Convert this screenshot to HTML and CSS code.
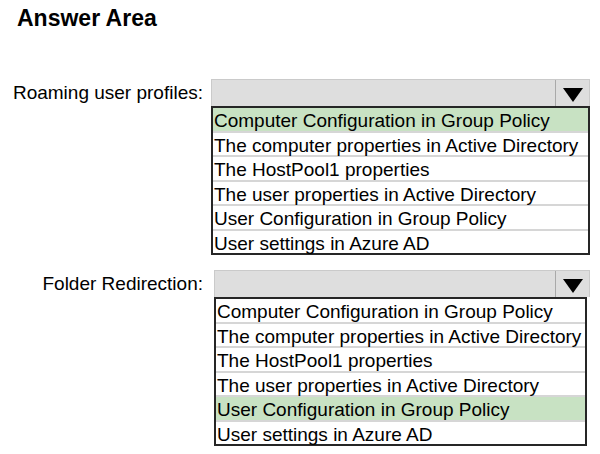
FILE: index.html
```html
<!DOCTYPE html>
<html lang="en">
<head>
<meta charset="utf-8">
<title>Answer Area</title>
<link rel="stylesheet" href="styles.css">
</head>
<body>
<main class="answer-area">
  <h1 class="title">Answer Area</h1>

  <section class="question">
    <div class="label">Roaming user profiles:</div>
    <div class="dropdown">
      <div class="dropdown-head">
        <span class="dropdown-value"></span>
        <span class="dropdown-arrow">
          <svg width="20" height="14" viewBox="0 0 20 14"><polygon points="0,0 20,0 10,14" fill="#000"/></svg>
        </span>
      </div>
      <ul class="dropdown-list">
        <li class="option selected">Computer Configuration in Group Policy</li>
        <li class="option">The computer properties in Active Directory</li>
        <li class="option">The HostPool1 properties</li>
        <li class="option">The user properties in Active Directory</li>
        <li class="option">User Configuration in Group Policy</li>
        <li class="option">User settings in Azure AD</li>
      </ul>
    </div>
  </section>

  <section class="question question-second">
    <div class="label">Folder Redirection:</div>
    <div class="dropdown dropdown-shifted">
      <div class="dropdown-head">
        <span class="dropdown-value"></span>
        <span class="dropdown-arrow">
          <svg width="20" height="14" viewBox="0 0 20 14"><polygon points="0,0 20,0 10,14" fill="#000"/></svg>
        </span>
      </div>
      <ul class="dropdown-list">
        <li class="option">Computer Configuration in Group Policy</li>
        <li class="option">The computer properties in Active Directory</li>
        <li class="option">The HostPool1 properties</li>
        <li class="option">The user properties in Active Directory</li>
        <li class="option selected">User Configuration in Group Policy</li>
        <li class="option">User settings in Azure AD</li>
      </ul>
    </div>
  </section>
</main>
</body>
</html>
```

FILE: styles.css
```css
html, body {
  margin: 0;
  padding: 0;
  background: #fff;
}

body {
  font-family: "Liberation Sans", Arial, sans-serif;
  color: #000;
}

.answer-area {
  padding-top: 5px;
}

.title {
  margin: 0;
  padding-left: 17px;
  font-size: 23px;
  font-weight: bold;
  line-height: 26px;
}

.question {
  display: grid;
  grid-template-columns: 203px 379px;
  column-gap: 8px;
  align-items: start;
  margin-top: 48px;
}

.question-second {
  margin-top: 15px;
}

.label {
  text-align: right;
  font-size: 19px;
  line-height: 27px;
  white-space: nowrap;
}

.dropdown-shifted {
  margin-left: 3px;
}

.dropdown-head {
  display: flex;
  height: 27px;
  box-sizing: border-box;
  border: 1px solid #cacaca;
  border-bottom: none;
  background: #dedede;
}

.dropdown-value {
  flex: 1;
}

.dropdown-arrow {
  width: 34px;
  display: flex;
  align-items: center;
  justify-content: center;
  padding-top: 3px;
  box-sizing: border-box;
  border-left: 1px solid #a9a9a9;
}

.dropdown-list {
  list-style: none;
  margin: 0;
  padding: 0;
  border: 2px solid #262626;
  background: #fff;
}

.dropdown-shifted .dropdown-list {
  margin-right: 3px;
}

.option {
  height: 22.5px;
  padding-left: 1px;
  font-size: 19px;
  line-height: 25px;
  white-space: nowrap;
}

.option + .option {
  border-top: 2px solid #d6d6d6;
}

.option.selected {
  background: #c8e2c3;
}
```
